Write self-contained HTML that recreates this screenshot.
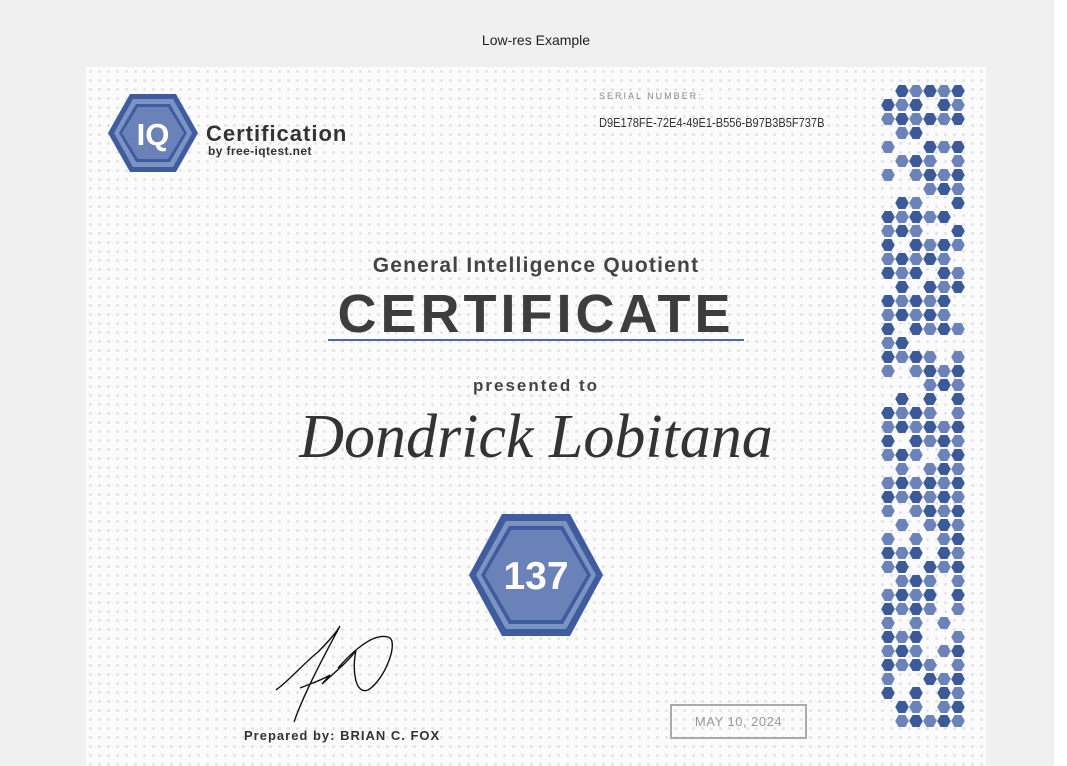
<!DOCTYPE html>
<html><head><meta charset="utf-8"><style>
*{margin:0;padding:0;box-sizing:border-box}
body{width:1067px;height:766px;background:#f0f0f0;position:relative;overflow:hidden;font-family:"Liberation Sans",sans-serif}
.top{position:absolute;top:32px;left:0;width:1072px;text-align:center;font-size:14px;color:#222}
.cert{position:absolute;left:86px;top:67px;width:900px;height:699px;background-color:#fbfbfb;background-image:radial-gradient(circle,#e3e3e3 1.3px,transparent 1.6px);background-size:9px 9px}
.abs{position:absolute;white-space:nowrap}
.c{left:0;width:1072px;text-align:center}
</style></head><body>
<div class="top">Low-res Example</div>
<div style="position:absolute;left:1054px;top:0;width:13px;height:766px;background:#fff"></div>
<div class="cert"></div>
<svg class="abs" style="left:0;top:0" width="1067" height="766">
<polygon points="108,133 130,94 176,94 198,133 176,172 130,172" fill="#3f5d9e"/>
<polygon points="114,133 133,99 173,99 192,133 173,167 133,167" fill="#7d93c4"/>
<polygon points="119,133 136,104 170,104 187,133 170,162 136,162" fill="#3f5d9e"/>
<polygon points="122,133 138,107 168,107 184,133 168,159 138,159" fill="#6a82b8"/>
<text x="153" y="145" text-anchor="middle" font-family="Liberation Sans" font-weight="bold" font-size="31" fill="#fff">IQ</text>
<polygon points="469,575 502,514 570,514 603,575 570,636 502,636" fill="#3f5d9e"/>
<polygon points="476,575 506,521 566,521 596,575 566,629 506,629" fill="#7d93c4"/>
<polygon points="481,575 509,526 563,526 591,575 563,624 509,624" fill="#3f5d9e"/>
<polygon points="485,575 511,530 561,530 587,575 561,620 511,620" fill="#6a82b8"/>
<text x="536" y="589" text-anchor="middle" font-family="Liberation Sans" font-weight="bold" font-size="39" fill="#fff">137</text>
<line x1="328" y1="340" x2="744" y2="340" stroke="#4a6aa8" stroke-width="2"/>
<path d="M276,690 C290,680 305,662 318,652 C330,640 338,630 340,626 C330,645 305,690 294,722 M300,688 C315,682 322,680 330,675 L322,684 C335,672 350,660 356,650 C352,670 355,695 368,690 C385,680 400,640 388,637 C370,632 345,660 338,668" fill="none" stroke="#111" stroke-width="1.4"/>
</svg>
<div class="abs" style="left:206px;top:121px;font-size:22px;font-weight:bold;color:#333;letter-spacing:1px">Certification</div>
<div class="abs" style="left:208px;top:144px;font-size:12px;font-weight:bold;color:#333;letter-spacing:0.4px">by free-iqtest.net</div>
<div class="abs" style="left:599px;top:91px;font-size:9px;letter-spacing:2px;color:#888">SERIAL NUMBER:</div>
<div class="abs" style="left:599px;top:115px;font-size:13px;color:#333;transform:scaleX(0.85);transform-origin:left">D9E178FE-72E4-49E1-B556-B97B3B5F737B</div>
<div class="abs c" style="top:254px;font-size:21px;font-weight:bold;color:#444;letter-spacing:1.2px">General Intelligence Quotient</div>
<div class="abs c" style="top:283px;font-size:54px;font-weight:bold;color:#3d3d3d;letter-spacing:4px">CERTIFICATE</div>
<div class="abs c" style="top:376px;font-size:17px;font-weight:bold;color:#444;letter-spacing:2px">presented to</div>
<div class="abs c" style="top:402px;font-family:'Liberation Serif',serif;font-style:italic;font-size:62px;color:#333">Dondrick Lobitana</div>
<div class="abs" style="left:244px;top:728px;font-size:13px;font-weight:bold;color:#333;letter-spacing:1px">Prepared by: BRIAN C. FOX</div>
<div class="abs" style="left:670px;top:704px;width:137px;height:35px;border:2px solid #aaa;font-size:13px;color:#999;text-align:center;line-height:31px;letter-spacing:0.5px">MAY 10, 2024</div>
<svg class="abs" style="left:0;top:0" width="1067" height="766" id="hx"></svg>
<script>
var rows=[".DLDLD","DLD.DL","LDLDLD",".LD...","L..DLD",".LDL.L","L.LDLD","...LDL",".DL..D","DLDLD.","LDL..D","D.DLDL","LDLDL.","DLD.DL",".D.DLD","DLDLD.","LDLDL.","D.DLDL","LD....","DLDL.L","L.LDLD","...LDL",".D.D.D","DLDL.L","LDLDLD","D.DLDL","LDL.LD",".L.LDL","LDLDLD","DLDLDL","L.LDLD",".L.LDL","L.L.LD","DLD.DL","LD.DLD",".LDL.L","LDLD.D","DLDL.L","L.L.L.","DLD..L","LDL.LD","DLDL.L","L..DLD","D.D.DL",".DL.LD",".LDLDL"];
var s="";
for(var i=0;i<rows.length;i++){for(var j=0;j<6;j++){var c=rows[i][j];if(c==".")continue;var x=888+14*j,y=91+14*i;
s+='<polygon points="'+(x-6.8)+','+y+' '+(x-3.4)+','+(y-6)+' '+(x+3.4)+','+(y-6)+' '+(x+6.8)+','+y+' '+(x+3.4)+','+(y+6)+' '+(x-3.4)+','+(y+6)+'" fill="'+(c=="D"?"#3d5a98":"#6b83b8")+'"/>';}}
document.getElementById("hx").innerHTML=s;
</script>
</body></html>
